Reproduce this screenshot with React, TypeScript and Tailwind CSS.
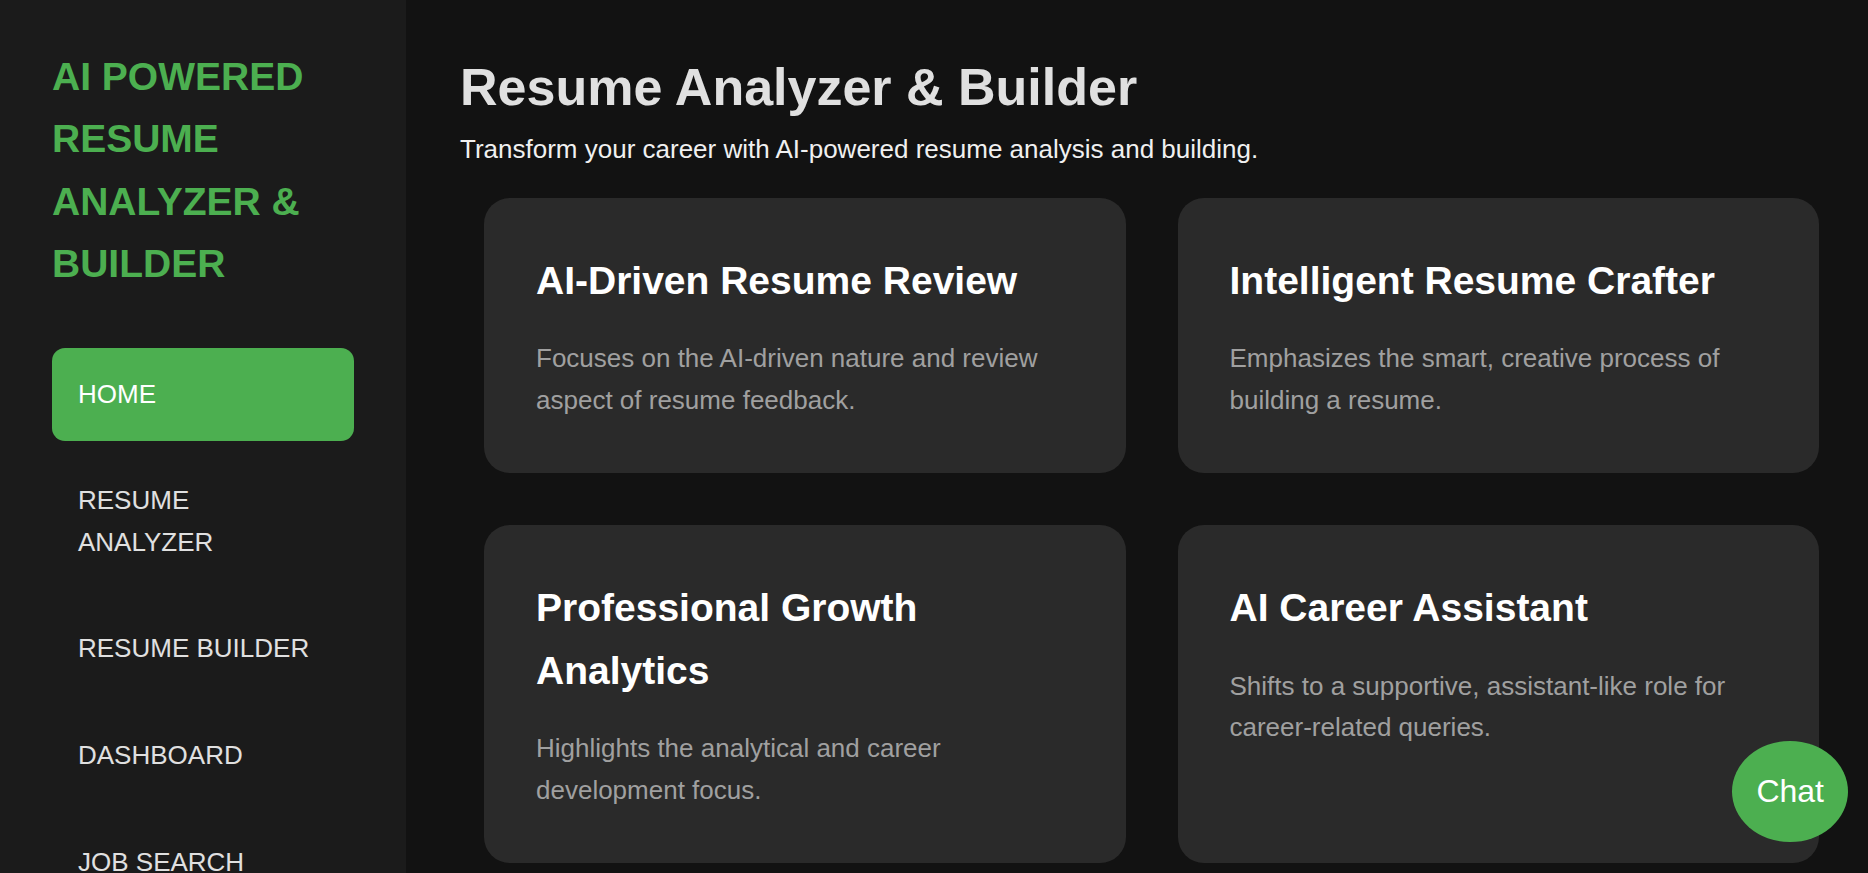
const navItems = ["HOME", "RESUME ANALYZER", "RESUME BUILDER", "DASHBOARD", "JOB SEARCH"];

const features = [
  {
    title: "AI-Driven Resume Review",
    text: "Focuses on the AI-driven nature and review aspect of resume feedback.",
  },
  {
    title: "Intelligent Resume Crafter",
    text: "Emphasizes the smart, creative process of building a resume.",
  },
  {
    title: "Professional Growth Analytics",
    text: "Highlights the analytical and career development focus.",
  },
  {
    title: "AI Career Assistant",
    text: "Shifts to a supportive, assistant-like role for career-related queries.",
  },
];

function Sidebar() {
  return (
    <aside className="w-[406px] shrink-0 bg-[#1b1b1b] px-[52px] pt-[46px]">
      <h1 className="text-[39px] leading-[1.6] font-bold text-[#4caf50] mb-[52px]">
        AI POWERED RESUME ANALYZER &amp; BUILDER
      </h1>
      <nav className="flex flex-col gap-[13px]">
        {navItems.map((item, i) => (
          <a
            key={item}
            className={
              i === 0
                ? "block rounded-[13px] bg-[#4caf50] p-[26px] text-[26px] leading-[1.6] text-white"
                : "block rounded-[13px] p-[26px] text-[26px] leading-[1.6] text-[#e0e0e0]"
            }
          >
            {item}
          </a>
        ))}
      </nav>
    </aside>
  );
}

function FeatureCard({ title, text }: { title: string; text: string }) {
  return (
    <div className="rounded-[26px] bg-[#2a2a2a] p-[52px]">
      <h3 className="text-[39px] leading-[1.6] font-bold text-white mb-[26px]">{title}</h3>
      <p className="text-[26px] leading-[1.6] text-[#a0a0a0]">{text}</p>
    </div>
  );
}

export default function App() {
  return (
    <div
      className="relative flex h-[873px] overflow-hidden bg-[#121212]"
      style={{ fontFamily: '"Liberation Sans", Arial, sans-serif' }}
    >
      <Sidebar />
      <main className="flex-1 pl-[54px] pr-[49px] pt-[46px]">
        <h2 className="text-[52px] leading-[1.6] font-bold text-[#e0e0e0]">Resume Analyzer &amp; Builder</h2>
        <p className="text-[26px] leading-[1.6] text-[#f0f0f0]">
          Transform your career with AI-powered resume analysis and building.
        </p>
        <div className="ml-[24px] mt-[27px] grid grid-cols-2 gap-[52px]">
          {features.map((f) => (
            <FeatureCard key={f.title} title={f.title} text={f.text} />
          ))}
        </div>
      </main>
      <button className="absolute right-[20px] bottom-[31px] rounded-[50%] bg-[#4caf50] px-[24px] py-[26px] text-[32px] leading-[49px] text-white">
        Chat
      </button>
    </div>
  );
}
